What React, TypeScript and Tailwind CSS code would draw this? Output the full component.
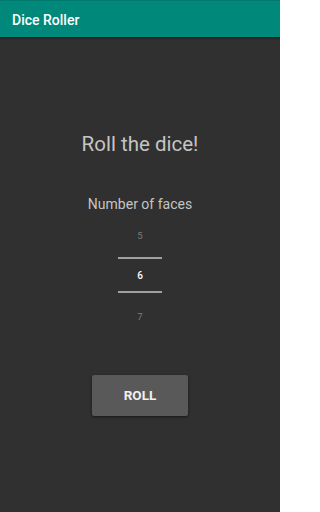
import React from "react";

export default function App() {
  return (
    <div
      className="w-[280px] h-[512px] bg-[#303030] flex flex-col overflow-hidden"
      style={{ fontFamily: "Roboto, 'Liberation Sans', sans-serif" }}
    >
      <div className="relative z-10 h-[37px] shrink-0 bg-[#00897b] border-t border-[#00786c] px-3 pt-[12px] shadow-[0_1px_2px_rgba(0,0,0,0.5)]">
        <div className="text-white text-[14px] font-medium leading-[14px]">Dice Roller</div>
      </div>
      <div className="flex flex-col items-center">
        <div className="mt-[95px] h-[24px] text-[20.5px] leading-[24px] text-[#c4c4c4]">Roll the dice!</div>
        <div className="mt-[39px] h-[18px] text-[14px] leading-[18px] text-[#c4c4c4]">Number of faces</div>
        <div className="flex flex-col items-center w-[44px]">
          <div className="mt-[17px] h-[12px] leading-[12px] text-[9.5px] text-[#7c7c7c]">5</div>
          <div className="mt-[15px] h-[2px] w-full bg-[#a0a0a0]"></div>
          <div className="mt-[11px] h-[12px] leading-[12px] text-[10px] font-medium text-white">6</div>
          <div className="mt-[9px] h-[2px] w-full bg-[#a0a0a0]"></div>
          <div className="mt-[18px] h-[12px] leading-[12px] text-[9.5px] text-[#7c7c7c]">7</div>
        </div>
        <button className="mt-[52px] w-[96px] h-[41px] bg-[#595959] text-[#f0f0f0] text-[13.5px] font-bold leading-none shadow-[0_1px_3px_rgba(0,0,0,0.5)] rounded-[2px]">
          ROLL
        </button>
      </div>
    </div>
  );
}
